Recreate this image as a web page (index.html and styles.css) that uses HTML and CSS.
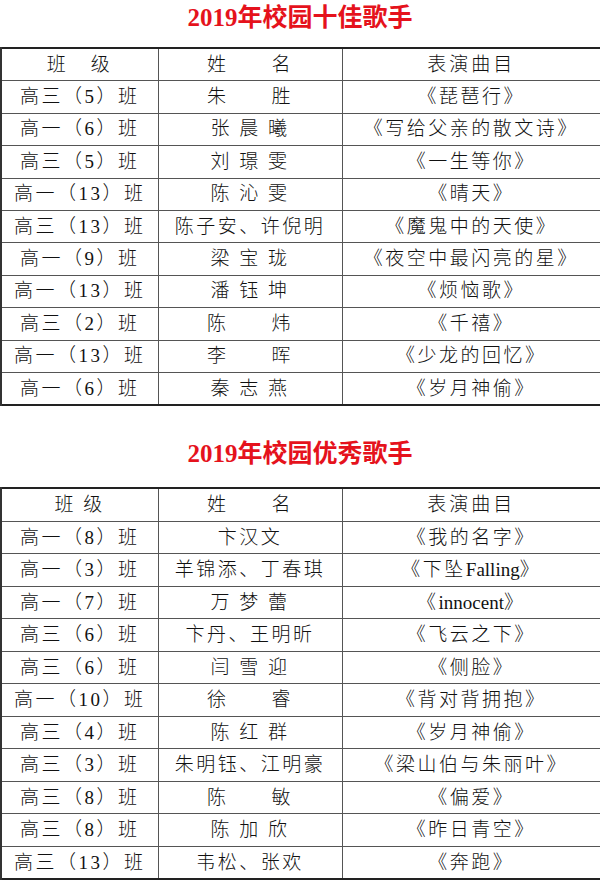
FILE: index.html
```html
<!DOCTYPE html>
<html lang="zh-CN">
<head>
<meta charset="utf-8">
<link rel="stylesheet" href="styles.css">
</head>
<body>
<div class="page">
  <h1 class="title title-first">2019年校园十佳歌手</h1>
  <table class="list">
    <colgroup><col class="c1"><col class="c2"><col class="c3"></colgroup>
    <tr class="head"><td class="wide">班&emsp;级</td><td>姓&emsp;&emsp;名</td><td class="wide">表演曲目</td></tr>
    <tr><td>高三（5）班</td><td>朱&emsp;&emsp;胜</td><td>《琵琶行》</td></tr>
    <tr><td>高一（6）班</td><td>张 晨 曦</td><td>《写给父亲的散文诗》</td></tr>
    <tr><td>高三（5）班</td><td>刘 璟 雯</td><td>《一生等你》</td></tr>
    <tr><td>高一（13）班</td><td>陈 沁 雯</td><td>《晴天》</td></tr>
    <tr><td>高三（13）班</td><td>陈子安、许倪明</td><td>《魔鬼中的天使》</td></tr>
    <tr><td>高一（9）班</td><td>梁 宝 珑</td><td>《夜空中最闪亮的星》</td></tr>
    <tr><td>高一（13）班</td><td>潘 钰 坤</td><td>《烦恼歌》</td></tr>
    <tr><td>高三（2）班</td><td>陈&emsp;&emsp;炜</td><td>《千禧》</td></tr>
    <tr><td>高一（13）班</td><td>李&emsp;&emsp;晖</td><td>《少龙的回忆》</td></tr>
    <tr><td>高一（6）班</td><td>秦 志 燕</td><td>《岁月神偷》</td></tr>
  </table>
  <h1 class="title title-second">2019年校园优秀歌手</h1>
  <table class="list list-second">
    <colgroup><col class="c1"><col class="c2"><col class="c3"></colgroup>
    <tr class="head"><td>班 级</td><td>姓&emsp;&emsp;名</td><td class="wide">表演曲目</td></tr>
    <tr><td>高一（8）班</td><td>卞汉文</td><td>《我的名字》</td></tr>
    <tr><td>高一（3）班</td><td>羊锦添、丁春琪</td><td>《下坠<span class="latin">Falling</span>》</td></tr>
    <tr><td>高一（7）班</td><td>万 梦 蕾</td><td>《<span class="latin">innocent</span>》</td></tr>
    <tr><td>高三（6）班</td><td>卞丹、王明昕</td><td>《飞云之下》</td></tr>
    <tr><td>高三（6）班</td><td>闫 雪 迎</td><td>《侧脸》</td></tr>
    <tr><td>高一（10）班</td><td>徐&emsp;&emsp;睿</td><td>《背对背拥抱》</td></tr>
    <tr><td>高三（4）班</td><td>陈 红 群</td><td>《岁月神偷》</td></tr>
    <tr><td>高三（3）班</td><td>朱明钰、江明豪</td><td>《梁山伯与朱丽叶》</td></tr>
    <tr><td>高三（8）班</td><td>陈&emsp;&emsp;敏</td><td>《偏爱》</td></tr>
    <tr><td>高三（8）班</td><td>陈 加 欣</td><td>《昨日青空》</td></tr>
    <tr><td>高三（13）班</td><td>韦松、张欢</td><td>《奔跑》</td></tr>
  </table>
</div>
</body>
</html>
```
FILE: styles.css
```css
html, body {
  margin: 0;
  padding: 0;
  background: #ffffff;
}
.page {
  width: 600px;
  font-family: "Liberation Serif", "Noto Sans CJK SC", serif;
  color: #111111;
}
.title {
  margin: 0;
  box-sizing: border-box;
  text-align: center;
  font-family: "Liberation Serif", "Noto Sans CJK SC", serif;
  font-weight: bold;
  font-size: 25px;
  line-height: 30px;
  color: #e5121c;
}
.title-first {
  height: 47px;
  padding-top: 3px;
}
.title-second {
  height: 81px;
  padding-top: 33px;
}
.list {
  width: 600px;
  border-collapse: collapse;
  table-layout: fixed;
  border-top: 2px solid #222;
  border-bottom: 2px solid #222;
}
.c1 { width: 157px; }
.c2 { width: 184px; }
.c3 { width: 259px; }
.list td {
  height: 31.4px;
  padding: 0;
  border: 1px solid #555;
  text-align: center;
  vertical-align: middle;
  font-size: 19px;
  letter-spacing: 2.5px;
  font-weight: 300;
  line-height: 22px;
  white-space: nowrap;
}
.list-second td {
  height: 31.5px;
}
.list .latin {
  letter-spacing: 0;
}
.list tr.head td.wide {
  letter-spacing: 3px;
}
.list td:first-child {
  border-left: 2px solid #333;
}
.list td:last-child {
  border-right: 2px solid #333;
}
```
